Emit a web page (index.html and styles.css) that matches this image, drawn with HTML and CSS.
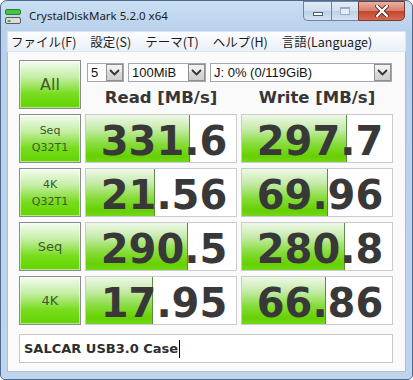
FILE: index.html
```html
<!DOCTYPE html>
<html lang="ja">
<head>
    <meta charset="UTF-8">
    <title>CrystalDiskMark 5.2.0 x64</title>
    <link rel="stylesheet" href="styles.css">
</head>
<body>
    <div class="window">
        <div class="titlebar">
            <svg class="app-icon" width="16" height="16" viewBox="0 0 16 16">
                <rect x="0.5" y="1.5" width="15" height="5" rx="1.5" fill="#46c446" stroke="#2b7d2b"/>
                <rect x="0.5" y="9.5" width="15" height="6" rx="1.5" fill="#dcdcdc" stroke="#5a5a5a"/>
                <rect x="2.5" y="12" width="3" height="2" fill="#37b437"/>
            </svg>
            <span class="title">CrystalDiskMark 5.2.0 x64</span>
            <div class="caption">
                <div class="cap-btn min"><span class="min-icon"></span></div>
                <div class="cap-btn max"><span class="max-icon"></span></div>
                <div class="cap-btn close">
                    <svg width="14" height="12" viewBox="0 0 14 12">
                        <path d="M2 1 L12 11 M12 1 L2 11" stroke="#5a2a22" stroke-width="4" stroke-linecap="round"/>
                        <path d="M2 1 L12 11 M12 1 L2 11" stroke="#fff" stroke-width="2.4" stroke-linecap="round"/>
                    </svg>
                </div>
            </div>
        </div>

        <div class="frame">
            <div class="menubar">
                <span>ファイル(F)</span>
                <span>設定(S)</span>
                <span>テーマ(T)</span>
                <span>ヘルプ(H)</span>
                <span>言語(Language)</span>
            </div>

            <div class="client">
                <div class="grid">
                    <div class="label big">All</div>
                    <div class="head">
                        <div class="combos">
                            <div class="combo count"><span>5</span><i class="arrow"><svg width="11" height="7" viewBox="0 0 11 7"><path d="M1 1 L5.5 5.5 L10 1" fill="none" stroke="#333" stroke-width="1.8"/></svg></i></div>
                            <div class="combo size"><span>100MiB</span><i class="arrow"><svg width="11" height="7" viewBox="0 0 11 7"><path d="M1 1 L5.5 5.5 L10 1" fill="none" stroke="#333" stroke-width="1.8"/></svg></i></div>
                            <div class="combo drive"><span>J: 0% (0/119GiB)</span><i class="arrow"><svg width="11" height="7" viewBox="0 0 11 7"><path d="M1 1 L5.5 5.5 L10 1" fill="none" stroke="#333" stroke-width="1.8"/></svg></i></div>
                        </div>
                        <div class="heads">
                            <span>Read [MB/s]</span>
                            <span>Write [MB/s]</span>
                        </div>
                    </div>

                    <div class="label">Seq<br>Q32T1</div>
                    <div class="val"><div class="bar" style="width:104px"></div><span>331.6</span></div>
                    <div class="val"><div class="bar" style="width:105px"></div><span>297.7</span></div>

                    <div class="label">4K<br>Q32T1</div>
                    <div class="val"><div class="bar" style="width:69px"></div><span>21.56</span></div>
                    <div class="val"><div class="bar" style="width:86px"></div><span>69.96</span></div>

                    <div class="label mid">Seq</div>
                    <div class="val"><div class="bar" style="width:102px"></div><span>290.5</span></div>
                    <div class="val"><div class="bar" style="width:103px"></div><span>280.8</span></div>

                    <div class="label mid">4K</div>
                    <div class="val"><div class="bar" style="width:67px"></div><span>17.95</span></div>
                    <div class="val"><div class="bar" style="width:84px"></div><span>66.86</span></div>
                </div>

                <div class="comment">SALCAR USB3.0 Case<span class="caret"></span></div>
            </div>
        </div>
    </div>
</body>
</html>
```

FILE: styles.css
```css
* {
  margin: 0;
  padding: 0;
  box-sizing: border-box;
}

body {
  width: 413px;
  height: 380px;
  overflow: hidden;
  background: #fff;
}

.window {
  width: 413px;
  height: 380px;
  border: 1px solid #4f6a8c;
  border-radius: 7px 7px 5px 5px;
  background: linear-gradient(to bottom, #cadff3, #b8d0ea 30px, #bed5ed);
  display: flex;
  flex-direction: column;
  overflow: hidden;
}

/* title bar */
.titlebar {
  height: 30px;
  display: flex;
  align-items: flex-start;
  padding-left: 4px;
}

.app-icon {
  margin-top: 7px;
}

.title {
  margin-top: 7px;
  margin-left: 8px;
  font-family: "Noto Sans", sans-serif;
  font-size: 11.5px;
  line-height: 16px;
  color: #1b1b1b;
}

.caption {
  margin-left: auto;
  margin-right: 7px;
  display: flex;
  height: 20px;
}

.cap-btn {
  height: 20px;
  border: 1px solid #6c83a2;
  display: flex;
  align-items: center;
  justify-content: center;
}

.min, .max {
  width: 28px;
  background: linear-gradient(to bottom, #e4edf8, #cfdeef 50%, #bccfe5 50%, #d3e3f3);
}

.min {
  border-radius: 0 0 0 5px;
  border-right: none;
}

.max {
  width: 27px;
  border-right: none;
}

.min-icon {
  width: 10px;
  height: 4px;
  margin-top: 5px;
  background: #fff;
  border: 1px solid #4b5e78;
}

.max-icon {
  width: 10px;
  height: 8px;
  border: 1px solid #9aabc2;
  border-top-width: 2px;
  background: #e3ebf5;
}

.close {
  width: 47px;
  border-color: #7c3b30;
  border-radius: 0 0 5px 0;
  background: linear-gradient(to bottom, #eab1a3, #d77c68 50%, #c3452e 50%, #d56a50);
}

/* frame + menu */
.frame {
  flex: 1;
  padding: 0 6px 7px 6px;
  display: flex;
  flex-direction: column;
}

.menubar {
  height: 21px;
  border: 1px solid #dbe5f0;
  background: linear-gradient(to bottom, #fcfdff, #e9f0f8);
  display: flex;
  align-items: center;
  gap: 14px;
  padding-left: 3px;
  font-family: "Noto Sans CJK JP", sans-serif;
  font-size: 12.5px;
  color: #1a1a1a;
}

.client {
  flex: 1;
  background: #fafafa;
  border: 1px solid #aebfd3;
  border-top: none;
  padding: 8px 0 0 11px;
}

.grid {
  display: grid;
  grid-template-columns: 62px 152px 152px;
  grid-auto-rows: 49px;
  gap: 5px 4px;
}

/* green buttons on the left */
.label {
  border: 1px solid #8b8b8b;
  background: linear-gradient(to bottom, #f4fcf1 0%, #c4eea4 35%, #78dc1e 70%, #62d400 100%);
  box-shadow: inset 0 0 0 1px rgba(255, 255, 255, .5);
  display: flex;
  align-items: center;
  justify-content: center;
  text-align: center;
  font-family: "DejaVu Sans", sans-serif;
  font-size: 11px;
  line-height: 17px;
  color: #3e5a2e;
}

.label.big {
  font-size: 16px;
}

.label.mid {
  font-size: 13px;
}

.head {
  grid-column: span 2;
  display: flex;
  flex-direction: column;
}

.combos {
  display: flex;
  gap: 4px;
  margin-top: 3px;
  padding-left: 2px;
}

.combo {
  height: 19px;
  border: 1px solid #a3a6ad;
  background: #fff;
  display: flex;
  align-items: center;
  font-family: "Liberation Sans", sans-serif;
  font-size: 13px;
  color: #111;
}

.combo span {
  flex: 1;
  padding-left: 3px;
}

.combo.count { width: 37px; }
.combo.size { width: 78px; }
.combo.drive { width: 182px; }

.arrow {
  width: 17px;
  height: 17px;
  border: 1px solid #8e8f8f;
  background: linear-gradient(to bottom, #f3f3f3, #e6e6e6 50%, #d8d8d8 50%, #cfcfcf);
  display: flex;
  align-items: center;
  justify-content: center;
}

.heads {
  display: flex;
  gap: 4px;
  margin-top: 6px;
}

.heads span {
  width: 152px;
  text-align: center;
  font-family: "DejaVu Sans", sans-serif;
  font-weight: bold;
  font-size: 16.5px;
  line-height: 20px;
  color: #363636;
}

/* result boxes */
.val {
  position: relative;
  border: 1px solid #cbcbcb;
  background: #fff;
  overflow: hidden;
}

.bar {
  position: absolute;
  left: 0;
  top: 0;
  bottom: 0;
  border-right: 1px solid #5f8a45;
  background: linear-gradient(to bottom, #eef8e8 0%, #c6ebaa 30%, #86dc3a 62%, #66d000 88%, #72d81c 100%);
}

.val span {
  position: relative;
  display: block;
  text-align: center;
  padding-left: 6px;
  font-family: "DejaVu Sans", sans-serif;
  font-weight: bold;
  font-size: 40px;
  line-height: 52px;
  color: #383838;
}

.comment {
  width: 374px;
  height: 29px;
  margin-top: 9px;
  border: 1px solid #c7c7c7;
  background: #fff;
  padding-left: 4px;
  display: flex;
  align-items: center;
  font-family: "DejaVu Sans", sans-serif;
  font-weight: bold;
  font-size: 13px;
  color: #2e2e2e;
}

.caret {
  width: 1px;
  height: 18px;
  background: #000;
  margin-left: 1px;
}
```
